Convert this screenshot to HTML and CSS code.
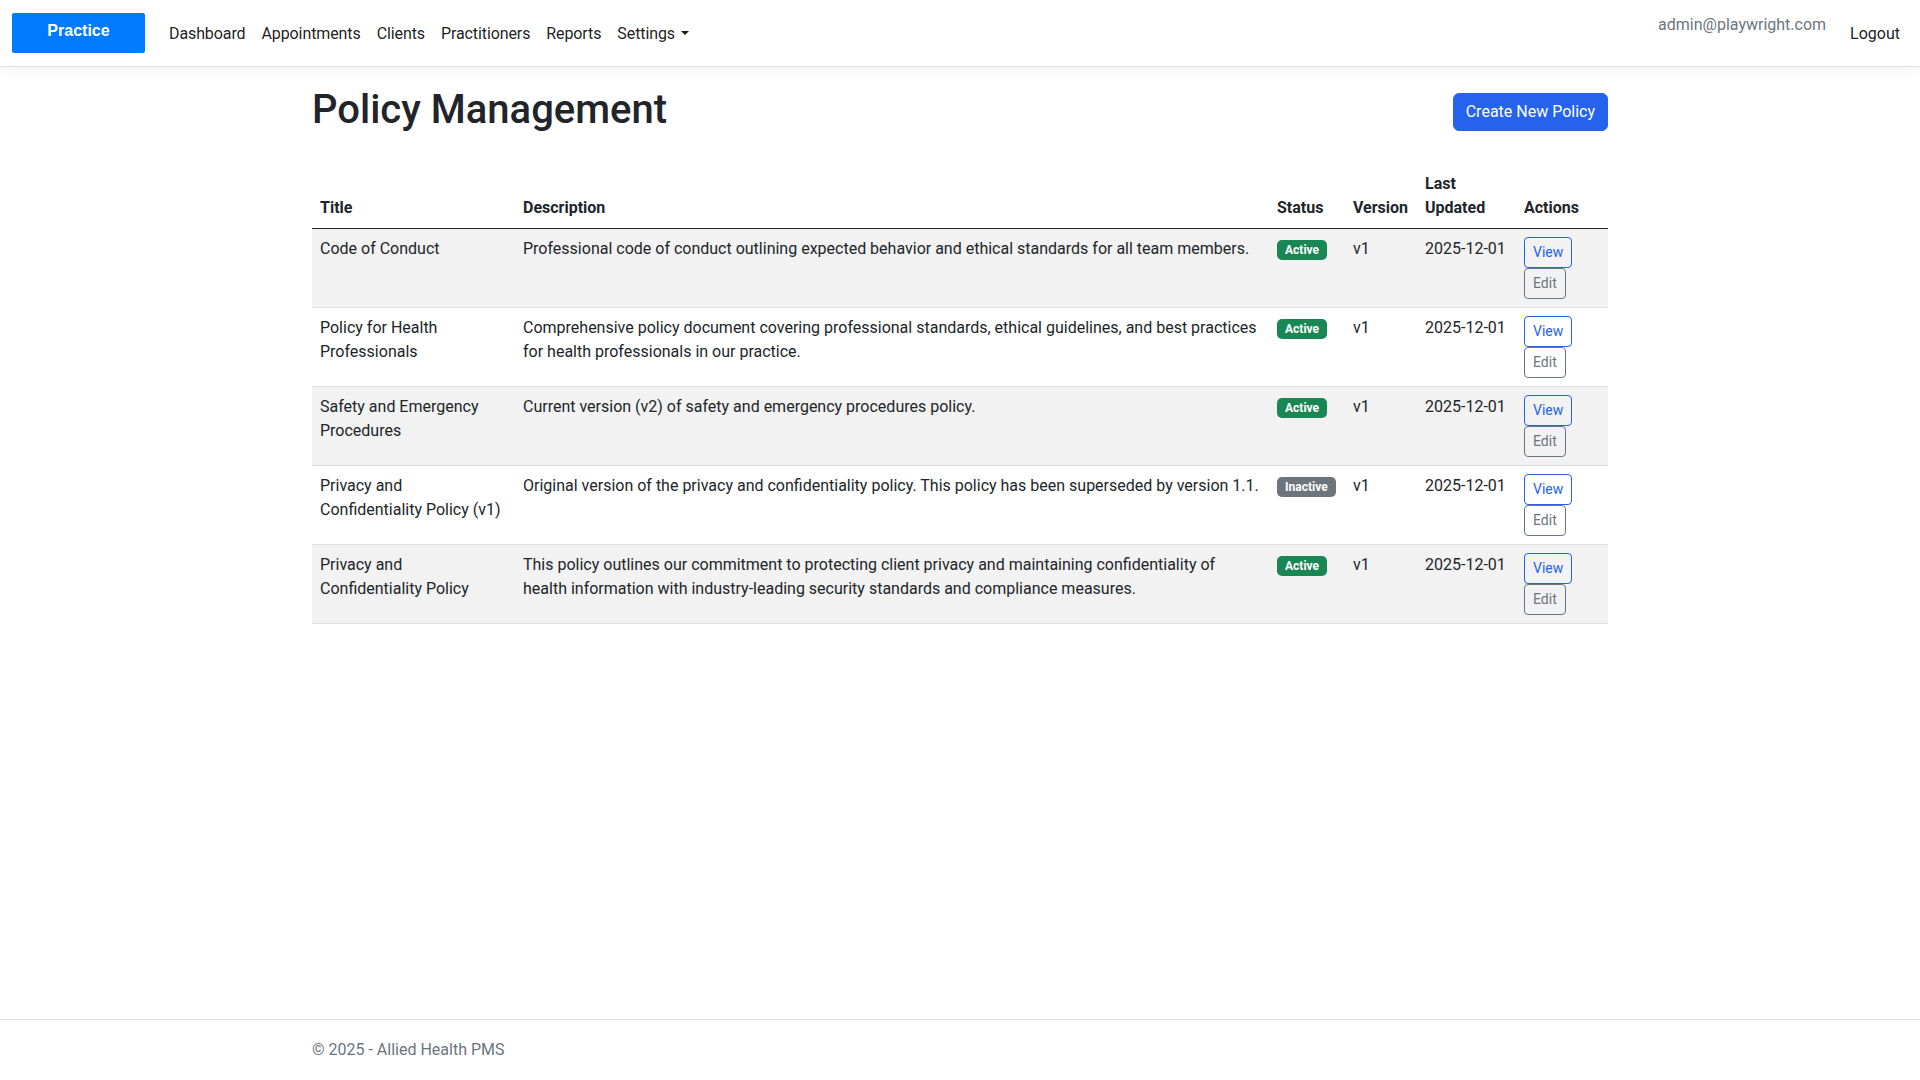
FILE: index.html
```html
<!DOCTYPE html>
<html>
<head>
    <title>Policy Management - Allied Health PMS</title>
    <link rel="stylesheet" href="styles.css">
</head>
    <body>
        <!-- top navigation bar -->
        <header class="site-header">
            <nav class="navbar">
                <a class="brand" href="#">Practice</a>
                <ul class="nav-links">
                    <li><a href="#">Dashboard</a></li>
                    <li><a href="#">Appointments</a></li>
                    <li><a href="#">Clients</a></li>
                    <li><a href="#">Practitioners</a></li>
                    <li><a href="#">Reports</a></li>
                    <li><a href="#" class="dropdown-toggle">Settings</a></li>
                </ul>
                <div class="nav-user">
                    <span class="user-email">admin@playwright.com</span>
                    <a href="#" class="logout">Logout</a>
                </div>
            </nav>
        </header>

        <main class="container">
            <!-- page title and main action -->
            <div class="page-header">
                <h1>Policy Management</h1>
                <a href="#" class="btn btn-primary">Create New Policy</a>
            </div>

            <!-- list of policies -->
            <table class="policy-table">
                <colgroup>
                    <col class="col-title">
                    <col class="col-description">
                    <col class="col-status">
                    <col class="col-version">
                    <col class="col-updated">
                    <col class="col-actions">
                </colgroup>
                <thead>
                    <tr>
                        <th>Title</th>
                        <th>Description</th>
                        <th>Status</th>
                        <th>Version</th>
                        <th>Last Updated</th>
                        <th>Actions</th>
                    </tr>
                </thead>
                <tbody>
                    <tr>
                        <td>Code of Conduct</td>
                        <td>Professional code of conduct outlining expected behavior and ethical standards for all team members.</td>
                        <td><span class="badge badge-active">Active</span></td>
                        <td>v1</td>
                        <td>2025-12-01</td>
                        <td>
                            <div class="actions">
                                <a href="#" class="btn-sm btn-view">View</a>
                                <a href="#" class="btn-sm btn-edit">Edit</a>
                            </div>
                        </td>
                    </tr>
                    <tr>
                        <td>Policy for Health Professionals</td>
                        <td>Comprehensive policy document covering professional standards, ethical guidelines, and best practices for health professionals in our practice.</td>
                        <td><span class="badge badge-active">Active</span></td>
                        <td>v1</td>
                        <td>2025-12-01</td>
                        <td>
                            <div class="actions">
                                <a href="#" class="btn-sm btn-view">View</a>
                                <a href="#" class="btn-sm btn-edit">Edit</a>
                            </div>
                        </td>
                    </tr>
                    <tr>
                        <td>Safety and Emergency Procedures</td>
                        <td>Current version (v2) of safety and emergency procedures policy.</td>
                        <td><span class="badge badge-active">Active</span></td>
                        <td>v1</td>
                        <td>2025-12-01</td>
                        <td>
                            <div class="actions">
                                <a href="#" class="btn-sm btn-view">View</a>
                                <a href="#" class="btn-sm btn-edit">Edit</a>
                            </div>
                        </td>
                    </tr>
                    <tr>
                        <td>Privacy and Confidentiality Policy (v1)</td>
                        <td>Original version of the privacy and confidentiality policy. This policy has been superseded by version 1.1.</td>
                        <td><span class="badge badge-inactive">Inactive</span></td>
                        <td>v1</td>
                        <td>2025-12-01</td>
                        <td>
                            <div class="actions">
                                <a href="#" class="btn-sm btn-view">View</a>
                                <a href="#" class="btn-sm btn-edit">Edit</a>
                            </div>
                        </td>
                    </tr>
                    <tr>
                        <td>Privacy and Confidentiality Policy</td>
                        <td>This policy outlines our commitment to protecting client privacy and maintaining confidentiality of health information with industry-leading security standards and compliance measures.</td>
                        <td><span class="badge badge-active">Active</span></td>
                        <td>v1</td>
                        <td>2025-12-01</td>
                        <td>
                            <div class="actions">
                                <a href="#" class="btn-sm btn-view">View</a>
                                <a href="#" class="btn-sm btn-edit">Edit</a>
                            </div>
                        </td>
                    </tr>
                </tbody>
            </table>
        </main>

        <footer class="footer">
            <div class="container">&copy; 2025 - Allied Health PMS</div>
        </footer>
    </body>
</html>
```

FILE: styles.css
```css
/* base page setup */
body {
    margin: 0;
    min-height: 100vh;
    display: flex;
    flex-direction: column;
    font-family: Roboto, "Liberation Sans", sans-serif;
    font-size: 16px;
    line-height: 1.5;
    color: #212529;
    background: #fff;
}

a {
    text-decoration: none;
}

/* navigation bar */
.site-header {
    border-bottom: 1px solid #dee2e6;
    box-shadow: 0 4px 12px rgba(0, 0, 0, 0.05);
}

.navbar {
    display: flex;
    align-items: center;
    height: 50px;
    padding: 9px 12px 7px;
}

.brand {
    display: flex;
    align-items: center;
    justify-content: center;
    box-sizing: border-box;
    width: 133px;
    height: 40px;
    margin: -2px 16px 0 0;
    padding-bottom: 4px;
    background-color: #007bff;
    border-radius: 2px;
    color: #fff;
    font-family: "Liberation Sans", Arial, sans-serif;
    font-weight: bold;
    font-size: 16px;
}

.nav-links {
    display: flex;
    list-style: none;
    margin: 0;
    padding: 0;
}

.nav-links a,
.logout {
    display: block;
    padding: 8px;
    color: rgba(0, 0, 0, 0.9);
}

.nav-links a {
    letter-spacing: -0.1px;
}

/* little caret after Settings */
.dropdown-toggle::after {
    content: "";
    display: inline-block;
    margin-left: 0.4em;
    vertical-align: 0.255em;
    border-top: 0.3em solid;
    border-right: 0.3em solid transparent;
    border-left: 0.3em solid transparent;
}

.nav-user {
    margin-left: auto;
    display: flex;
    align-items: center;
    align-self: stretch;
}

.user-email {
    align-self: flex-start;
    margin-top: 4px;
    margin-right: 16px;
    color: #6c757d;
}

/* main content */
.container {
    width: 100%;
    max-width: 1320px;
    margin: 0 auto;
    padding: 0 12px;
    box-sizing: border-box;
}

main.container {
    flex: 1;
    padding-top: 19px;
}

.page-header {
    display: flex;
    justify-content: space-between;
    align-items: center;
    margin-bottom: 26px;
}

.page-header h1 {
    margin: 0 0 4px;
    font-size: 40px;
    font-weight: 500;
    line-height: 1.2;
}

.btn {
    display: inline-block;
    padding: 6px 12px;
    border: 1px solid transparent;
    border-radius: 6px;
    font-size: 16px;
    line-height: 24px;
}

.btn-primary {
    background-color: #2563eb;
    border-color: #2563eb;
    color: #fff;
}

/* policy table */
.policy-table {
    width: 100%;
    table-layout: fixed;
    border-collapse: collapse;
}

.col-title { width: 203px; }
.col-description { width: 754px; }
.col-status { width: 76px; }
.col-version { width: 72px; }
.col-updated { width: 99px; }
.col-actions { width: 92px; }

.policy-table th,
.policy-table td {
    padding: 8px;
    text-align: left;
    vertical-align: top;
}

.policy-table th {
    vertical-align: bottom;
    font-weight: bold;
    border-bottom: 1px solid #212529;
}

.policy-table td {
    border-bottom: 1px solid #dee2e6;
}

.policy-table tbody tr:nth-child(odd) td {
    background-color: #f2f2f2;
}

.badge {
    display: inline-block;
    padding: 4px 8px;
    border-radius: 5px;
    font-size: 12px;
    font-weight: bold;
    line-height: 1;
    color: #fff;
}

.badge-active {
    background-color: #198754;
}

.badge-inactive {
    background-color: #6c757d;
}

.actions {
    display: flex;
    flex-direction: column;
    align-items: flex-start;
}

.btn-sm {
    display: inline-block;
    padding: 4px 8px;
    border: 1px solid;
    border-radius: 4px;
    font-size: 14px;
    line-height: 21px;
}

.btn-view {
    color: #2563eb;
    border-color: #2563eb;
}

.btn-edit {
    color: #6c757d;
    border-color: #6c757d;
}

/* footer */
.footer {
    border-top: 1px solid #dee2e6;
    line-height: 60px;
    color: #6c757d;
    white-space: nowrap;
}
```
